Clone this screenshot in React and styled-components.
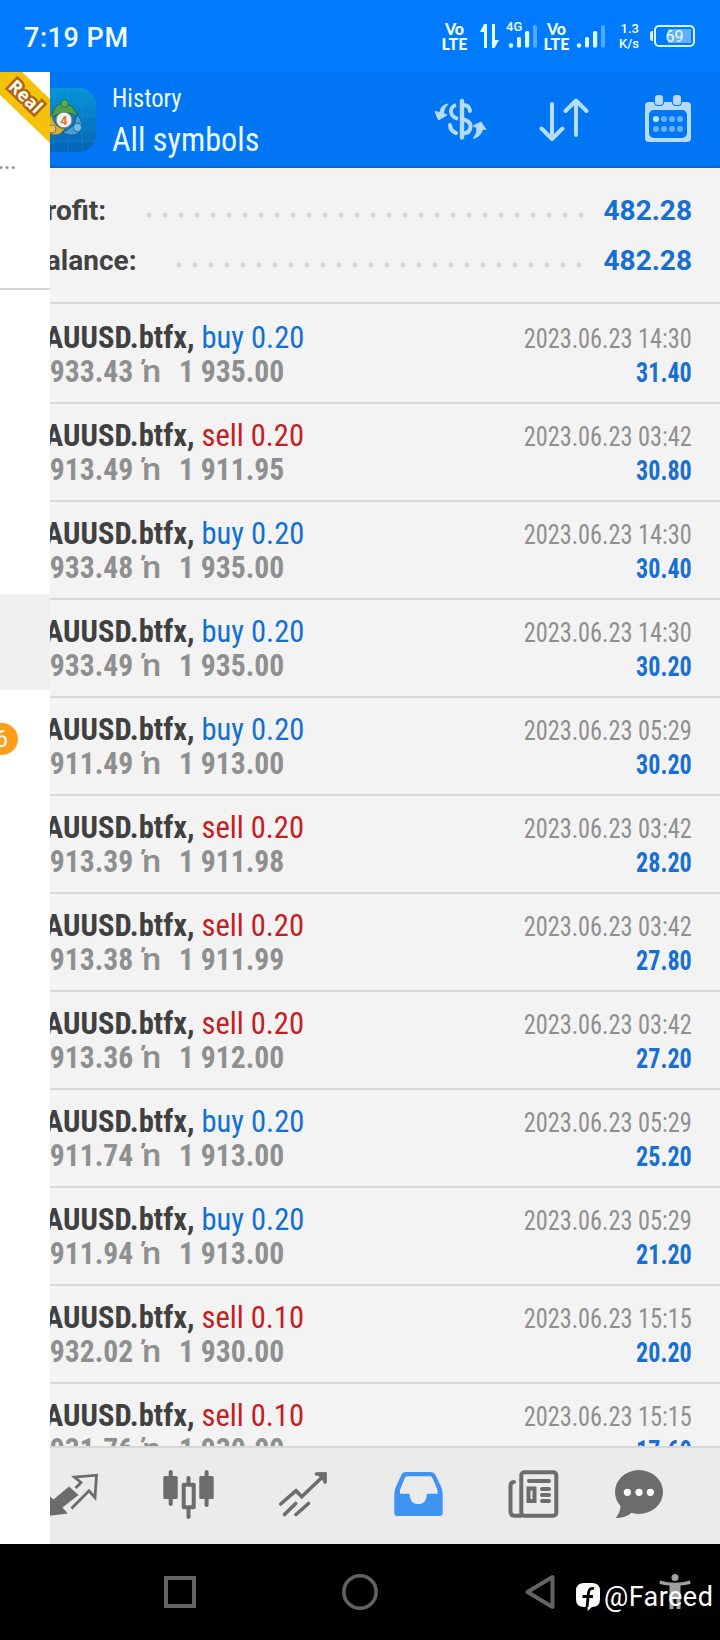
import React from "react";
import styled, { createGlobalStyle } from "styled-components";

const GlobalStyle = createGlobalStyle`
  * { box-sizing: border-box; }
  body { margin: 0; background: #000; font-family: "Roboto", sans-serif; }
  svg { display: block; flex: none; }
`;

const Phone = styled.div`
  width: 720px;
  height: 1640px;
  overflow: hidden;
  display: flex;
  flex-direction: column;
  position: relative;
`;

/* ---- status bar ---- */

const StatusBar = styled.div`
  height: 72px;
  padding: 0 25px 0 24px;
  background: #007bff;
  color: #f1ffff;
  display: flex;
  align-items: center;
  justify-content: space-between;
`;

const Clock = styled.div`
  font-size: 27px;
  font-weight: 500;
  line-height: 32px;
  padding-top: 3px;
  letter-spacing: 0.55px;
`;

const StatusIcons = styled.div`
  display: flex;
  align-items: center;
`;

const Volte = styled.div`
  width: 27px;
  margin-left: ${(p) => p.$gap || 0}px;
  padding-bottom: 1px;
  font-family: "Lato", sans-serif;
  font-size: 16px;
  font-weight: 900;
  line-height: 15px;
  text-align: center;
`;

const Signal = styled.svg`
  margin-left: ${(p) => p.$gap}px;
`;

const NetType = styled.div`
  position: absolute;
  left: 6px;
  top: -3px;
  font-size: 13px;
  line-height: 14px;
  font-weight: 500;
`;

const SignalBox = styled.div`
  position: relative;
`;

const Speed = styled.div`
  width: 22px;
  margin-left: 12px;
  font-size: 13px;
  font-weight: 500;
  line-height: 15px;
  text-align: right;
`;

const Battery = styled.div`
  position: relative;
  width: 41px;
  height: 22px;
  margin-left: 15px;
  border: 2px solid #d9f2ff;
  border-radius: 5px;
  background: linear-gradient(#62b0ff, #62b0ff) 12px 2px / 23px 14px no-repeat;
  font-size: 16px;
  line-height: 19px;
  text-align: center;

  &::before {
    content: "";
    position: absolute;
    left: -6px;
    top: 4px;
    width: 3px;
    height: 10px;
    border-radius: 2px 0 0 2px;
    background: #d9f2ff;
  }
`;

/* ---- drawer edge ---- */

const Screen = styled.div`
  display: flex;
  height: 1472px;
`;

const Drawer = styled.div`
  width: 50px;
  flex: none;
  background: #fff;
  overflow: hidden;
  display: flex;
  flex-direction: column;
`;

const Account = styled.div`
  height: 218px;
  border-bottom: 2px solid #d5d5d5;
  position: relative;
`;

const Ribbon = styled.div`
  width: 50px;
  height: 71px;
  background: #f4c20a;
  clip-path: polygon(0 0, 22px 0, 50px 27px, 50px 71px, 0 23px);
`;

const RibbonText = styled.div`
  position: absolute;
  left: 1px;
  top: 13px;
  width: 50px;
  text-align: center;
  font: 700 18px/22px "Open Sans", sans-serif;
  color: #fff;
  -webkit-text-stroke: 5px #b3650c;
  paint-order: stroke fill;
  transform: rotate(44deg);
`;

const AccountDots = styled.div`
  padding-top: 9px;
  margin-left: -2px;
  font-size: 22px;
  font-weight: 500;
  line-height: 20px;
  color: #8f8f8f;
`;

const DrawerItem = styled.div`
  height: 96px;
  margin-top: 304px;
  background: #f0f0f0;
`;

const Badge = styled.div`
  width: 44px;
  height: 32px;
  margin: 33px 0 0 -26px;
  padding-right: 10px;
  border-radius: 16px;
  background: #ff9e1b;
  color: #fff;
  font-size: 23px;
  line-height: 33px;
  text-align: right;
`;

/* ---- header ---- */

const Main = styled.div`
  flex: 1;
  min-width: 0;
  overflow: hidden;
  display: flex;
  flex-direction: column;
  background: #f3f3f3;
`;

const Header = styled.div`
  height: 96px;
  flex: none;
  background: #0076f5;
  box-shadow: inset 0 -3px 2px -1px #0c62c4;
  display: flex;
  align-items: center;
  padding-right: 28px;
`;

const AppIcon = styled.svg`
  margin-left: -18px;
`;

const Titles = styled.div`
  flex: 1;
  padding: 3px 0 0 16px;
  color: #eafcff;
  font-family: "Roboto Condensed", "Roboto", sans-serif;
  transform: scaleX(0.948);
  transform-origin: 16px 0;
`;

const Subtitle = styled.div`
  font-size: 26px;
  line-height: 34px;
`;

const Title = styled.div`
  font-size: 34px;
  line-height: 48px;
`;

const Actions = styled.div`
  display: flex;
  align-items: center;
`;

const Action = styled.div`
  margin-left: ${(p) => p.$gap || 0}px;
`;

/* ---- totals ---- */

const Summary = styled.div`
  flex: none;
  height: 136px;
  padding: 17px 28px 0 0;
  border-bottom: 2px solid #d8d8d8;
`;

const Total = styled.div`
  display: flex;
  align-items: center;
  height: 50px;
  font-size: 28px;
  font-weight: 700;
`;

const TotalLabel = styled.div`
  width: ${(p) => p.$width}px;
  margin-left: -22px;
  color: #424242;
`;

const Leader = styled.div`
  width: ${(p) => p.$count * 16}px;
  height: 16px;
  margin-top: 9px;
  background: radial-gradient(circle, #d6d6d6 2px, transparent 3px) 0 0 / 16px 16px;
`;

const TotalValue = styled.div`
  margin-left: auto;
  color: #176fd1;
`;

/* ---- deals ---- */

const Deals = styled.div`
  flex: 1;
  min-height: 0;
  overflow: hidden;
`;

const Deal = styled.div`
  height: 98px;
  padding: 14px 28px 0 0;
  border-bottom: 2px solid #d8d8d8;
  display: flex;
  justify-content: space-between;
  font-family: "Roboto Condensed", "Roboto", sans-serif;
  line-height: 34px;
  white-space: pre;

  &:first-child {
    height: 100px;
    padding-top: 16px;
  }
`;

const DealInfo = styled.div`
  margin-left: -22px;
  font-size: 32px;
`;

const Order = styled.div`
  transform: scaleX(0.954);
  transform-origin: left;
`;

const Symbol = styled.span`
  color: #404040;
  font-weight: 700;
`;

const Side = styled.span`
  color: ${(p) => (p.$side === "buy" ? "#1370d3" : "#c4201f")};
`;

const Prices = styled.div`
  display: flex;
  color: #8f8f8f;
  font-weight: 700;
`;

const Price = styled.div`
  width: 111px;
  transform: scaleX(0.925);
  transform-origin: left;
`;

const Mark = styled.div`
  width: 40px;
  padding-left: 3px;
  font-family: "Roboto", sans-serif;
  font-weight: 500;
  transform: scaleX(1.06);
  transform-origin: left;
`;

const DealResult = styled.div`
  padding-top: 2px;
  text-align: right;
  font-size: 27px;
`;

const Time = styled.div`
  color: #8f8f8f;
  transform: scaleX(0.9);
  transform-origin: right;
`;

const Profit = styled.div`
  color: #176fd1;
  font-weight: 700;
  transform: scaleX(0.89);
  transform-origin: right;
`;

/* ---- bottom bars ---- */

const TabBar = styled.div`
  flex: none;
  height: 98px;
  border-top: 2px solid #d8d8d8;
  background: #ebebeb;
  color: #6c6c6c;
  display: flex;
  align-items: center;
`;

const Tab = styled.div`
  flex: none;
  width: ${(p) => p.$width || 115}px;
  display: flex;
  justify-content: center;

  &:first-child {
    margin-left: -34.5px;
  }
`;

const NavBar = styled.div`
  height: 96px;
  padding-left: 90px;
  background: #000;
  display: grid;
  grid-template-columns: 180px 180px 180px 90px;
  align-items: center;
  justify-items: center;
`;

const Watermark = styled.div`
  position: absolute;
  left: 576px;
  top: 1580px;
  display: flex;
  align-items: center;
  gap: 4px;
  color: #fff;
  font-family: "Roboto", sans-serif;
  font-size: 27px;
  line-height: 34px;
  letter-spacing: 0.45px;
`;

const deals = [
  ["buy", "0.20", "1 933.43", "1 935.00", "2023.06.23 14:30", "31.40"],
  ["sell", "0.20", "1 913.49", "1 911.95", "2023.06.23 03:42", "30.80"],
  ["buy", "0.20", "1 933.48", "1 935.00", "2023.06.23 14:30", "30.40"],
  ["buy", "0.20", "1 933.49", "1 935.00", "2023.06.23 14:30", "30.20"],
  ["buy", "0.20", "1 911.49", "1 913.00", "2023.06.23 05:29", "30.20"],
  ["sell", "0.20", "1 913.39", "1 911.98", "2023.06.23 03:42", "28.20"],
  ["sell", "0.20", "1 913.38", "1 911.99", "2023.06.23 03:42", "27.80"],
  ["sell", "0.20", "1 913.36", "1 912.00", "2023.06.23 03:42", "27.20"],
  ["buy", "0.20", "1 911.74", "1 913.00", "2023.06.23 05:29", "25.20"],
  ["buy", "0.20", "1 911.94", "1 913.00", "2023.06.23 05:29", "21.20"],
  ["sell", "0.10", "1 932.02", "1 930.00", "2023.06.23 15:15", "20.20"],
  ["sell", "0.10", "1 931.76", "1 930.00", "2023.06.23 15:15", "17.60"],
];

const Bars = ({ gap }) => (
  <Signal $gap={gap} width="30" height="26" viewBox="0 0 30 26" fill="#e2ffff">
    <circle cx="4" cy="22.5" r="2.2" />
    <rect x="10" y="14" width="4" height="10.5" rx="1.6" />
    <rect x="18" y="8" width="4.2" height="16.5" rx="1.6" />
    <rect x="26" y="2" width="4" height="22.5" rx="1.6" opacity="0.35" />
  </Signal>
);

const Logo = () => (
  <AppIcon width="64" height="64" viewBox="0 0 64 64">
    <defs>
      <linearGradient id="sky" x1="0" y1="0" x2="0" y2="1">
        <stop offset="0" stopColor="#0795d8" />
        <stop offset="1" stopColor="#0563b5" />
      </linearGradient>
    </defs>
    <rect width="64" height="64" rx="17" fill="url(#sky)" />
    <path d="M0 16H64M0 27H64M0 40H64M0 53H64M22 0V64M36 0V64M50 0V64" stroke="#2da7df" strokeWidth="0.7" opacity="0.4" />
    <path d="M20 29Q21 16 32 15Q43 17 46 30Q37 20 20 29Z" fill="#4e9f49" stroke="#1b683b" />
    <circle cx="32.5" cy="15.5" r="3.8" fill="#5aae50" stroke="#217744" />
    <path d="M20 26Q10 40 19 46Q27 49 33 41Q21 40 20 26Z" fill="#d3b03c" stroke="#6d7135" />
    <circle cx="20" cy="41" r="4" fill="#e6c552" stroke="#857a35" />
    <path d="M45 26Q54 37 47 45Q39 50 30 44Q43 41 45 26Z" fill="#4a9fd6" stroke="#155b91" />
    <circle cx="45.5" cy="39.5" r="4.2" fill="#6fbbe9" stroke="#1c6399" />
    <circle cx="32" cy="32" r="7.8" fill="#f2f4f0" stroke="#8c8b80" />
    <text x="32" y="36.5" textAnchor="middle" fontSize="13" fontWeight="700" fill="#e9703a">4</text>
  </AppIcon>
);

const Watch = () => (
  <svg width="54" height="50" viewBox="0 0 54 50" fill="#b5dafb" stroke="#b5dafb" strokeLinejoin="round">
    <path d="M14 9Q6.5 10 6 17.5L1 16.5L4.5 25L13 20L9.5 18.5Q9.5 13 14 9Z" />
    <path d="M39.5 43.5Q47.5 41 48.5 34L52 34.5L47 27L39 31L43 32.5Q43.5 38 39.5 43.5Z" />
    <path d="M22 10Q17 11.5 17 16.5Q17 21.5 24 24" fill="none" strokeWidth="3.8" />
    <path d="M28 10Q35.5 9.5 36 16M16 30Q16.5 36 22 38" fill="none" strokeWidth="4" strokeLinecap="round" />
    <path d="M28 24Q37 26 36.5 32Q36 38.5 28 38.5" fill="none" strokeWidth="4" />
    <path d="M28 6V42.5" strokeWidth="4.4" strokeLinecap="round" />
  </svg>
);

const Sort = () => (
  <svg width="50" height="46" viewBox="0 0 50 46" fill="none" stroke="#b8dcfc" strokeWidth="4" strokeLinecap="round" strokeLinejoin="round">
    <path d="M13 7V42M2.5 31.5L13 42L23.5 31.5" />
    <path d="M37 38V3.5M26.5 14L37 3.5L47.5 14" />
  </svg>
);

const Calendar = () => (
  <svg width="48" height="50" viewBox="0 0 48 50">
    <rect x="1" y="7" width="46" height="40" rx="4" fill="#b5dafb" />
    <rect x="5" y="15" width="38" height="28" rx="5" fill="#0076f5" />
    <rect x="10" y="0" width="10" height="11" rx="4" fill="#0076f5" />
    <rect x="28" y="0" width="10" height="11" rx="4" fill="#0076f5" />
    <rect x="11" y="0" width="8" height="10" rx="3" fill="#b5dafb" />
    <rect x="29" y="0" width="8" height="10" rx="3" fill="#b5dafb" />
    {[12, 20, 28, 36].map((x) => (
      <g key={x} fill="#60b0fb">
        <circle cx={x} cy="24" r="3.1" fill={x === 12 ? "#b8e2ff" : undefined} />
        <circle cx={x} cy="34" r="3.1" />
      </g>
    ))}
  </svg>
);

const TradeIcon = () => (
  <svg width="60" height="60" viewBox="0 0 60 60">
    <path d="M26 20.5L35.5 29L19.5 41.5L24.7 47.5L0 50.5L4 28L10.5 33.5Z" fill="currentColor" />
    <path d="M28.5 42.5L46 24.7L52 31.5L53.5 9.2L31.5 11L38 16.5L32.5 22" fill="none" stroke="currentColor" strokeWidth="2.8" />
  </svg>
);

const CandlesIcon = () => (
  <svg width="60" height="60" viewBox="0 0 60 60">
    <path d="M12.7 6V38M48.6 6V39M30.5 12V18M30.5 42V51" stroke="currentColor" strokeWidth="4" strokeLinecap="round" />
    <rect x="5.3" y="10" width="14.4" height="23" rx="1.5" fill="currentColor" />
    <rect x="41.3" y="10" width="14.4" height="23" rx="1.5" fill="currentColor" />
    <rect x="25.7" y="18.7" width="10" height="22.5" fill="none" stroke="currentColor" strokeWidth="4" strokeLinejoin="round" />
  </svg>
);

const TrendIcon = () => (
  <svg width="60" height="60" viewBox="0 0 60 60" fill="none" stroke="currentColor" strokeWidth="3.6" strokeLinecap="round">
    <path d="M7.7 38L23 24.7L28.7 30.7L52 8.5M22.7 37.5L11.5 48.5M35.5 37.5L23 48.5" />
    <path d="M43.5 8H52V16" />
    <path d="M44 7L53 7L52.5 17Z" fill="currentColor" strokeWidth="1" />
  </svg>
);

const InboxIcon = () => (
  <svg width="60" height="60" viewBox="0 0 60 60">
    <path
      fill="#3f94f3"
      fillRule="evenodd"
      d="M17.5 6H43Q46 6 47.2 8.5L53 20.5Q54.7 24 54.7 28V47Q54.7 50 51.7 50H9.3Q6.3 50 6.3 47V28Q6.3 24 8 20.5L13.5 8.5Q14.7 6 17.5 6ZM19.5 10.3Q17.6 10.3 16.8 12L12 24V27.8H21.5Q22 38.3 30.3 38.3Q38.5 38.3 39 27.8H49.5V24L44.5 12Q43.7 10.3 42 10.3Z"
    />
  </svg>
);

const NewsIcon = () => (
  <svg width="60" height="60" viewBox="0 0 60 60" fill="none" stroke="currentColor" strokeWidth="4" strokeLinecap="round">
    <rect x="18.3" y="6.3" width="35" height="43.4" rx="3" />
    <path d="M11 16Q7.5 16 7.5 20V45.5Q7.5 49.7 11.5 49.7H18" />
    <path d="M26 15H46M39 23H46M39 29H46M39 35H46" />
    <rect x="25.5" y="22.5" width="6" height="12.5" />
  </svg>
);

const ChatIcon = () => (
  <svg width="60" height="60" viewBox="0 0 60 60">
    <ellipse cx="30" cy="26" rx="24" ry="22" fill="currentColor" />
    <path d="M11.5 38Q12 46 6.5 52Q17 52 23.5 46Z" fill="currentColor" />
    <g fill="#fff">
      <circle cx="18.4" cy="26.3" r="3.6" />
      <circle cx="30" cy="26.3" r="3.6" />
      <circle cx="41.4" cy="26.3" r="3.6" />
    </g>
  </svg>
);

const App = () => {
  return (
    <>
      <GlobalStyle />
      <Phone>
        <StatusBar>
          <Clock>7:19 PM</Clock>
          <StatusIcons>
            <Volte>Vo<br />LTE</Volte>
            <Signal $gap={12} width="20" height="26" viewBox="0 0 20 26" fill="#e2ffff">
              <path d="M4 1H7V25H4V9H0Z" />
              <path d="M12 1H15V17H19L14.5 25H12Z" />
            </Signal>
            <SignalBox>
              <Bars gap={7} />
              <NetType>4G</NetType>
            </SignalBox>
            <Volte $gap={6}>Vo<br />LTE</Volte>
            <Bars gap={5} />
            <Speed>1.3<br />K/s</Speed>
            <Battery>69</Battery>
          </StatusIcons>
        </StatusBar>

        <Screen>
          <Drawer>
            <Account>
              <Ribbon />
              <RibbonText>Real</RibbonText>
              <AccountDots>...</AccountDots>
            </Account>
            <DrawerItem />
            <Badge>6</Badge>
          </Drawer>

          <Main>
            <Header>
              <Logo />
              <Titles>
                <Subtitle>History</Subtitle>
                <Title>All symbols</Title>
              </Titles>
              <Actions>
                <Action><Watch /></Action>
                <Action $gap={51}><Sort /></Action>
                <Action $gap={55}><Calendar /></Action>
              </Actions>
            </Header>

            <Summary>
              <Total>
                <TotalLabel $width={113}>Profit:</TotalLabel>
                <Leader $count={28} />
                <TotalValue>482.28</TotalValue>
              </Total>
              <Total>
                <TotalLabel $width={143}>Balance:</TotalLabel>
                <Leader $count={26} />
                <TotalValue>482.28</TotalValue>
              </Total>
            </Summary>

            <Deals>
              {deals.map(([side, lots, open, close, time, profit], i) => (
                <Deal key={i}>
                  <DealInfo>
                    <Order>
                      <Symbol>XAUUSD.btfx, </Symbol>
                      <Side $side={side}>{side} {lots}</Side>
                    </Order>
                    <Prices>
                      <Price>{open}</Price>
                      <Mark>ŉ</Mark>
                      <Price>{close}</Price>
                    </Prices>
                  </DealInfo>
                  <DealResult>
                    <Time>{time}</Time>
                    <Profit>{profit}</Profit>
                  </DealResult>
                </Deal>
              ))}
            </Deals>

            <TabBar>
              <Tab><TradeIcon /></Tab>
              <Tab><CandlesIcon /></Tab>
              <Tab><TrendIcon /></Tab>
              <Tab><InboxIcon /></Tab>
              <Tab><NewsIcon /></Tab>
              <Tab $width={97}><ChatIcon /></Tab>
            </TabBar>
          </Main>
        </Screen>

        <NavBar>
          <svg width="32" height="32"><rect x="2" y="2" width="28" height="28" fill="none" stroke="#636363" strokeWidth="4" /></svg>
          <svg width="36" height="36"><circle cx="18" cy="18" r="16.2" fill="none" stroke="#636363" strokeWidth="3.5" /></svg>
          <svg width="32" height="36"><path d="M28.5 3V33L3.5 18Z" fill="none" stroke="#636363" strokeWidth="4" strokeLinejoin="round" /></svg>
          <svg width="32" height="38" viewBox="0 0 32 38" fill="#a0a0a0">
            <circle cx="16" cy="4.5" r="3.5" />
            <path d="M1 7.5Q16 12 31 7.5L31.5 11Q26 12 21.5 12.5V36H17.5V25H14.5V36H10.5V12.5Q6 12 0.5 11Z" />
          </svg>
        </NavBar>

        <Watermark>
          <svg width="24" height="28" viewBox="0 0 24 28">
            <path d="M8 0H16Q24 0 24 8V16Q24 24 16 24L11.5 28V24H8Q0 24 0 16V8Q0 0 8 0Z" fill="#fff" />
            <path d="M18 5.5Q13 4.5 12.5 10L11 24M6.5 13.5H17" fill="none" stroke="#000" strokeWidth="2.8" />
          </svg>
          <span>@Fareed</span>
        </Watermark>
      </Phone>
    </>
  );
};

export default App;
